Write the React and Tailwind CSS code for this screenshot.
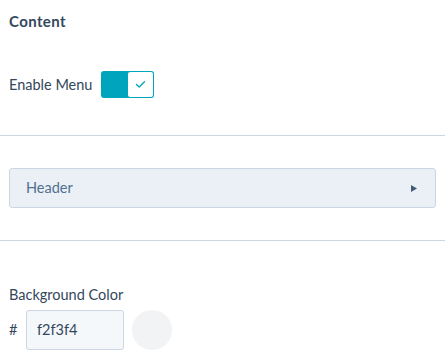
const font = { fontFamily: 'Lato, "Noto Sans", sans-serif' };

export default function App() {
  return (
    <div className="w-[445px] h-[358px] bg-white text-[#33475b] overflow-hidden" style={font}>
      {/* Content section */}
      <div className="px-[9px] pt-[12px]">
        <h2 className="text-[15px] font-bold leading-[18px] tracking-[0.4px]">Content</h2>
        <div className="flex items-center mt-[41px] gap-[9px]">
          <span className="text-[14.5px] leading-[18px]">Enable Menu</span>
          <button className="flex h-[27px] w-[53px] rounded-[3px] overflow-hidden bg-[#00a4bd]">
            <span className="flex-1" />
            <span className="w-[27px] h-[27px] bg-white border border-[#00a4bd] rounded-[3px] flex items-center justify-center">
              <svg width="11" height="9" viewBox="0 0 11 9" fill="none">
                <path d="M1.5 4.5 L4.2 7 L9.5 1.8" stroke="#00a4bd" strokeWidth="1.3" strokeLinecap="round" strokeLinejoin="round" />
              </svg>
            </span>
          </button>
        </div>
      </div>

      <div className="mt-[37px] border-t border-[#cbd6e2]" />

      {/* Header accordion */}
      <div className="px-[9px] pt-[32px] pb-[32px]">
        <div className="flex items-center justify-between h-[40px] pl-[16px] pr-[18px] bg-[#eaf0f6] border border-[#cbd6e2] rounded-[3px]">
          <span className="text-[14.5px] text-[#516f90]">Header</span>
          <svg width="6" height="7" viewBox="0 0 6 7">
            <path d="M0 0 L6 3.5 L0 7 Z" fill="#425b76" />
          </svg>
        </div>
      </div>

      <div className="border-t border-[#cbd6e2]" />

      {/* Background color */}
      <div className="px-[9px] pt-[45px]">
        <div className="text-[14.5px] leading-[18px]">Background Color</div>
        <div className="flex items-center mt-[6px]">
          <span className="text-[14.5px] w-[17px]">#</span>
          <div className="w-[98px] h-[40px] bg-[#f5f8fa] border border-[#cbd6e2] rounded-[3px] flex items-center pl-[10px] text-[14.5px]">
            f2f3f4
          </div>
          <div className="ml-[8px] w-[40px] h-[40px] rounded-full bg-[#f2f3f4]" />
        </div>
      </div>
    </div>
  );
}
